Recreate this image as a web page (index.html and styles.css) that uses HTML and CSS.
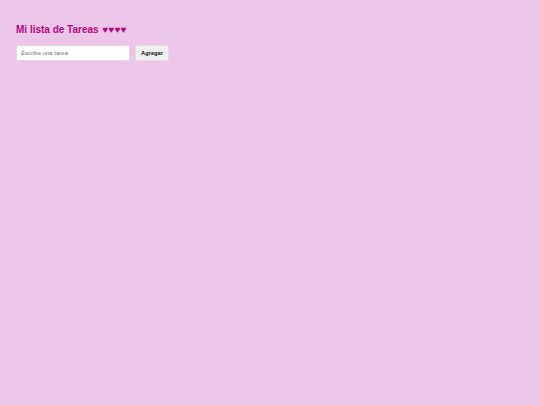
FILE: index.html
```html
<!DOCTYPE html>
<html lang="es">
<head>
<meta charset="utf-8">
<title>Mi lista de Tareas</title>
<link rel="stylesheet" href="styles.css">
</head>
<body>
<div class="app">
  <h1 class="title">Mi lista de Tareas <span class="hearts">♥♥♥♥</span></h1>
  <div class="form">
    <input class="task-input" type="text" placeholder="Escribe una tarea">
    <button class="add-btn">Agregar</button>
  </div>
  <ul class="list"></ul>
</div>
</body>
</html>
```
FILE: styles.css
```css
html, body {
  margin: 0;
  padding: 0;
  background: #ecc6e8;
  height: 100%;
}
body {
  font-family: "Liberation Sans", Arial, sans-serif;
}
.app {
  padding: 24px 16px;
}
.title {
  margin: 0 0 9px 0;
  font-size: 10px;
  line-height: 12px;
  font-weight: bold;
  color: #b4087f;
}
.hearts {
  margin-left: 1px;
  letter-spacing: 0.2px;
}
.form {
  display: flex;
  gap: 5px;
  align-items: center;
}
.task-input {
  box-sizing: border-box;
  width: 114px;
  height: 16px;
  padding: 0 4px;
  border: 1px solid #e2d6e0;
  border-radius: 2px;
  background: #fff;
  font-family: "Liberation Sans", Arial, sans-serif;
  font-size: 6px;
  outline: none;
}
.task-input::placeholder {
  color: #757575;
}
.add-btn {
  box-sizing: border-box;
  width: 34px;
  height: 16px;
  padding: 0;
  border: 1px solid #e6dde4;
  border-radius: 2px;
  background: #efefef;
  font-family: "Liberation Sans", Arial, sans-serif;
  font-size: 5.7px;
  font-weight: bold;
  color: #111;
}
.list {
  margin: 0;
  padding: 0;
}
```
